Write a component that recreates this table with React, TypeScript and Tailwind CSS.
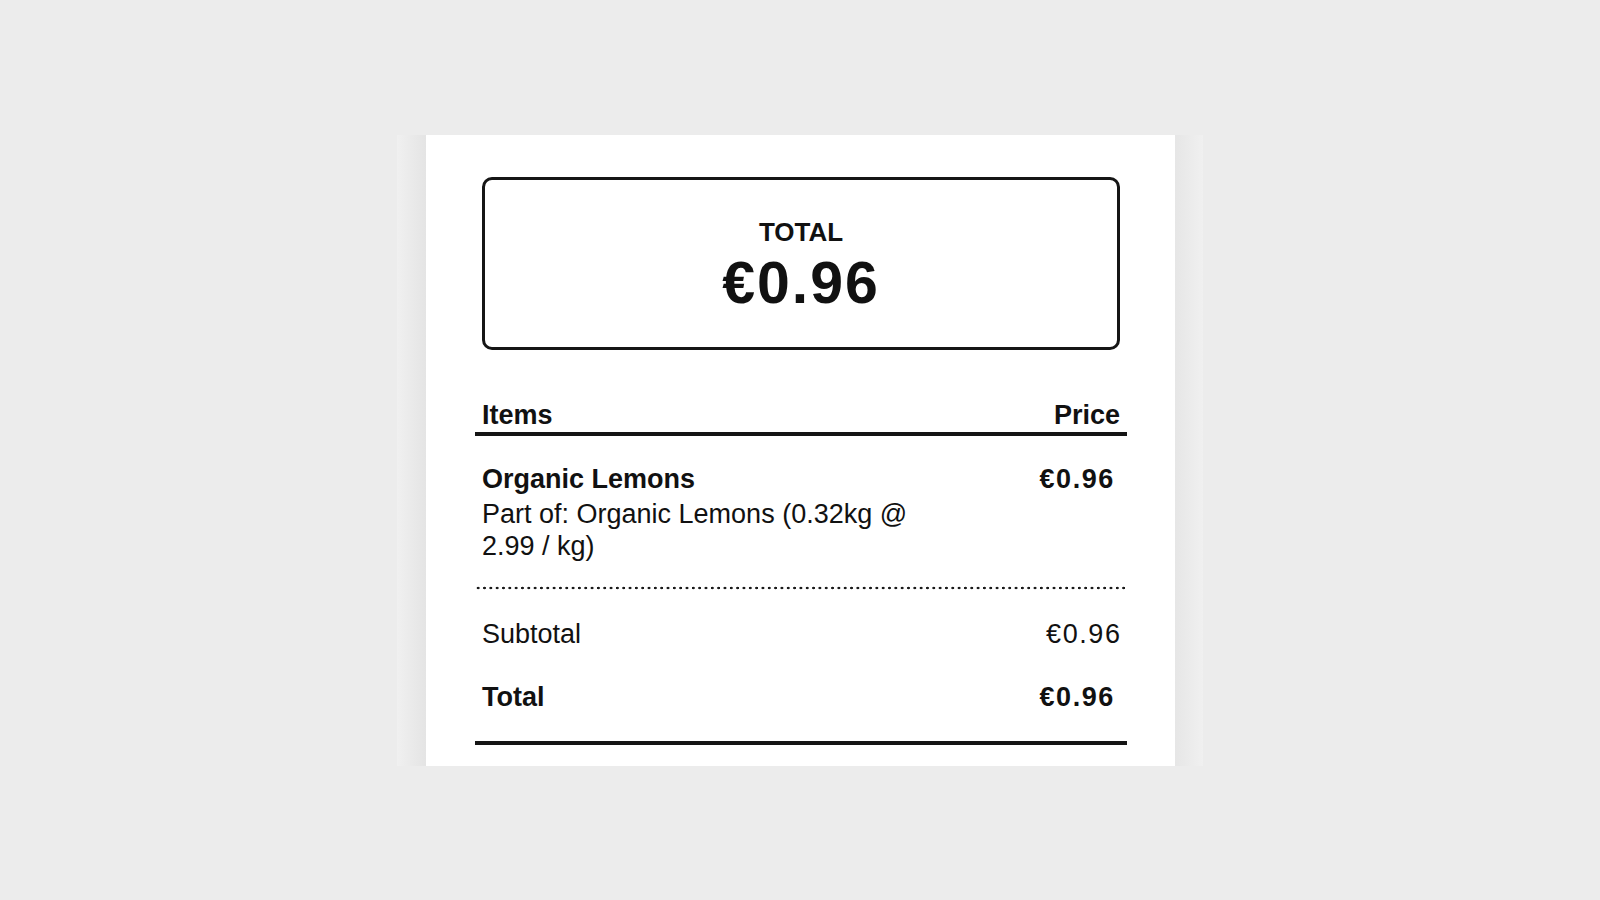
import { FC } from "react"

const lines = [
	{ label: "Subtotal", value: "€0.96", bold: false },
	{ label: "Total", value: "€0.96", bold: true },
]

const App: FC = () => {
	return (
		<div className="min-h-screen w-full bg-[#ececec] pt-[135px] font-['Liberation_Sans',Arial,sans-serif] text-[#111]">
			<div className="mx-auto flex w-[806px]">
				<div className="w-[29px] bg-gradient-to-r from-[#f0f0f0] to-[#e4e4e4]"></div>

				<div className="w-[749px] bg-white pl-[56px] pr-[55px] pt-[42px] pb-[21px]">
					<div className="flex h-[173px] flex-col items-center justify-center rounded-[10px] border-[3px] border-[#151515] pt-[3px]">
						<p className="text-[26px] leading-[28px] font-bold">TOTAL</p>
						<p className="mt-[8px] text-[59px] leading-[58px] font-bold tracking-[2px]">
							€0.96
						</p>
					</div>

					<div className="-mx-[7px] mt-[50px] flex justify-between border-b-4 border-[#151515] px-[7px] pb-[1px] text-[27px] leading-[31px] font-bold">
						<span>Items</span>
						<span>Price</span>
					</div>

					<div className="flex justify-between pt-[28px] pb-[24px]">
						<div className="w-[70%]">
							<p className="text-[27px] leading-[31px] font-bold">
								Organic Lemons
							</p>
							<p className="mt-[3px] text-[27px] leading-[32px]">
								Part of: Organic Lemons (0.32kg @ 2.99 / kg)
							</p>
						</div>
						<p className="pr-[5px] text-[27px] leading-[31px] font-bold tracking-[1.6px]">
							€0.96
						</p>
					</div>

					<div className="-mx-[7px] h-[4px] bg-[radial-gradient(circle,#1a1a1a_1.1px,transparent_1.6px)] bg-size-[6.33px_4px]"></div>

					<div className="flex flex-col gap-[32px] pt-[29px] pb-[28px]">
						{lines.map(line => (
							<div
								key={line.label}
								className={
									line.bold
										? "flex justify-between text-[27px] leading-[31px] font-bold"
										: "flex justify-between text-[27px] leading-[31px]"
								}
							>
								<span>{line.label}</span>
								<span
									className={
										line.bold
											? "pr-[5px] tracking-[1.6px]"
											: "-mr-[1.6px] tracking-[1.6px]"
									}
								>
									{line.value}
								</span>
							</div>
						))}
					</div>

					<div className="-mx-[7px] border-b-4 border-[#151515]"></div>
				</div>

				<div className="w-[28px] bg-gradient-to-r from-[#e6e6e6] to-[#f0f0f0]"></div>
			</div>
		</div>
	)
}

export default App
